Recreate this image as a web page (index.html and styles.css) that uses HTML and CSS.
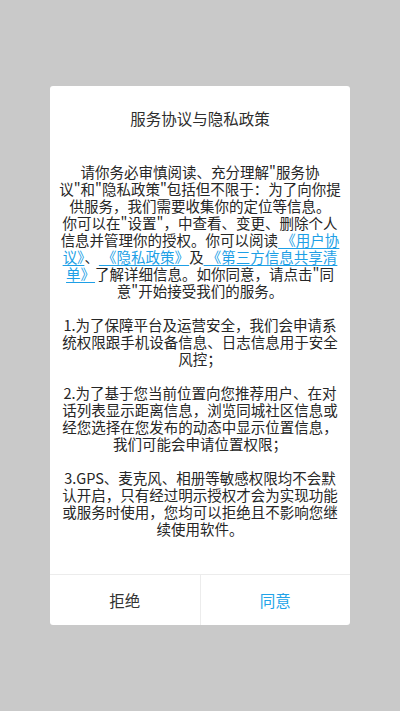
FILE: index.html
```html
<!DOCTYPE html>
<html lang="zh-CN">
<head>
<meta charset="utf-8">
<title>服务协议与隐私政策</title>
<link rel="stylesheet" href="styles.css">
</head>
<body>
<div class="screen">
  <div class="dialog">
    <div class="title">服务协议与隐私政策</div>
    <div class="content">
      <p class="para">请你务必审慎阅读、充分理解"服务协<br>议"和"隐私政策"包括但不限于：为了向你提<br>供服务，我们需要收集你的定位等信息。<br>你可以在"设置"，中查看、变更、删除个人<br>信息并管理你的授权。你可以阅读<a class="link"> 《用户协<br>议》</a>、<a class="link"> 《隐私政策》</a>及<a class="link"> 《第三方信息共享清<br>单》</a>了解详细信息。如你同意，请点击"同<br>意"开始接受我们的服务。</p>
      <p class="para">1.为了保障平台及运营安全，我们会申请系<br>统权限跟手机设备信息、日志信息用于安全<br>风控；</p>
      <p class="para">2.为了基于您当前位置向您推荐用户、在对<br>话列表显示距离信息，浏览同城社区信息或<br>经您选择在您发布的动态中显示位置信息，<br>我们可能会申请位置权限；</p>
      <p class="para">3.GPS、麦克风、相册等敏感权限均不会默<br>认开启，只有经过明示授权才会为实现功能<br>或服务时使用，您均可以拒绝且不影响您继<br>续使用软件。</p>
    </div>
    <div class="actions">
      <div class="btn btn-reject">拒绝</div>
      <div class="btn btn-agree">同意</div>
    </div>
  </div>
</div>
</body>
</html>
```
FILE: styles.css
```css
html, body {
  margin: 0;
  padding: 0;
}
body {
  background: #c9c9c9;
  font-family: "Noto Sans CJK SC", "Noto Sans", sans-serif;
  color: #333333;
}
.screen {
  width: 400px;
  height: 711px;
  padding-top: 86px;
  box-sizing: border-box;
  display: flex;
  flex-direction: column;
  align-items: center;
}
.dialog {
  width: 300px;
  height: 539px;
  background: #ffffff;
  border-radius: 3px;
  display: flex;
  flex-direction: column;
  overflow: hidden;
}
.title {
  padding-top: 21px;
  height: 22px;
  line-height: 22px;
  font-size: 15.5px;
  text-align: center;
  color: #2e2e2e;
}
.content {
  margin-top: 34px;
  flex: 1;
  font-size: 14.5px;
  line-height: 17px;
  text-align: center;
  color: #262626;
  white-space: nowrap;
}
.para {
  margin: 0 0 17px 0;
}
.link {
  color: #1d9fe6;
  text-decoration: underline;
  text-underline-offset: 2px;
}
.actions {
  height: 50px;
  border-top: 1.5px solid #ececec;
  display: flex;
}
.btn {
  flex: 1;
  display: flex;
  align-items: center;
  justify-content: center;
  font-size: 15.5px;
}
.btn-reject {
  color: #333333;
  border-right: 1.5px solid #ececec;
}
.btn-agree {
  color: #22a3e8;
}
```
